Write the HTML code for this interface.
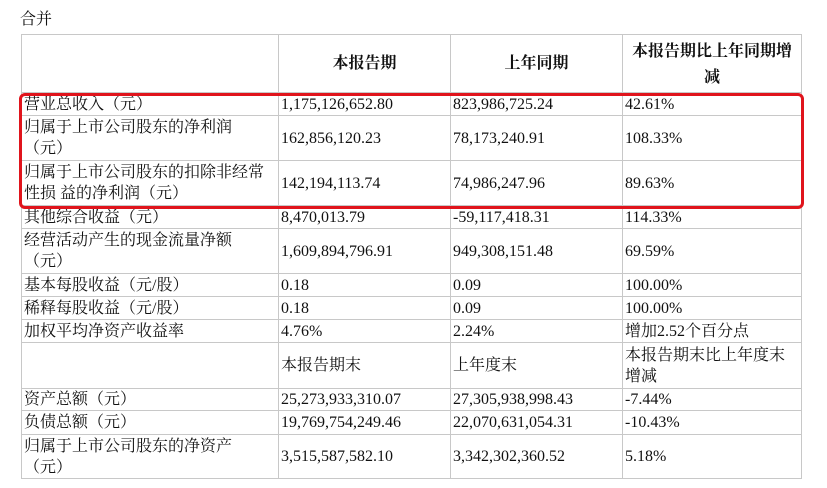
<!DOCTYPE html>
<html><head><meta charset="utf-8"><style>
body{margin:0;background:#fff;width:827px;height:488px;position:relative;overflow:hidden;font-family:"Liberation Serif","Noto Serif CJK SC","Noto Sans CJK SC",serif;color:#111;font-size:16px}
.t{position:absolute;left:20px;top:6px;font-size:16px}
table{position:absolute;left:21px;top:34px;border-collapse:collapse;table-layout:fixed;width:780px}
td{border:1px solid #c8c8c8;padding:0 2px;line-height:21px;vertical-align:middle;white-space:nowrap;overflow:hidden}
td.w{white-space:normal}
th{border:1px solid #c8c8c8;font-weight:bold;font-size:16px;line-height:26px}
.box{position:absolute;left:19px;top:93px;width:779px;height:110px;border:3px solid #e0141c;border-radius:6px}
</style></head><body>
<div class="t">合并</div>
<table>
<colgroup><col style="width:257px"><col style="width:172px"><col style="width:172px"><col style="width:179px"></colgroup>
<tr style="height:57px"><th></th><th>本报告期</th><th>上年同期</th><th style="padding-top:4px">本报告期比上年同期增<br>减</th></tr>
<tr style="height:23px"><td>营业总收入（元）</td><td>1,175,126,652.80</td><td>823,986,725.24</td><td>42.61%</td></tr>
<tr style="height:45px"><td class="w">归属于上市公司股东的净利润<br>（元）</td><td>162,856,120.23</td><td>78,173,240.91</td><td>108.33%</td></tr>
<tr style="height:45px"><td class="w">归属于上市公司股东的扣除非经常<br>性损 益的净利润（元）</td><td>142,194,113.74</td><td>74,986,247.96</td><td>89.63%</td></tr>
<tr style="height:23px"><td>其他综合收益（元）</td><td>8,470,013.79</td><td>-59,117,418.31</td><td>114.33%</td></tr>
<tr style="height:45px"><td class="w">经营活动产生的现金流量净额<br>（元）</td><td>1,609,894,796.91</td><td>949,308,151.48</td><td>69.59%</td></tr>
<tr style="height:23px"><td>基本每股收益（元/股）</td><td>0.18</td><td>0.09</td><td>100.00%</td></tr>
<tr style="height:23px"><td>稀释每股收益（元/股）</td><td>0.18</td><td>0.09</td><td>100.00%</td></tr>
<tr style="height:23px"><td>加权平均净资产收益率</td><td>4.76%</td><td>2.24%</td><td>增加2.52个百分点</td></tr>
<tr style="height:46px"><td></td><td>本报告期末</td><td>上年度末</td><td class="w">本报告期末比上年度末<br>增减</td></tr>
<tr style="height:22px"><td>资产总额（元）</td><td>25,273,933,310.07</td><td>27,305,938,998.43</td><td>-7.44%</td></tr>
<tr style="height:24px"><td>负债总额（元）</td><td>19,769,754,249.46</td><td>22,070,631,054.31</td><td>-10.43%</td></tr>
<tr style="height:44px"><td class="w">归属于上市公司股东的净资产<br>（元）</td><td>3,515,587,582.10</td><td>3,342,302,360.52</td><td>5.18%</td></tr>
</table>
<div class="box"></div>
</body></html>
